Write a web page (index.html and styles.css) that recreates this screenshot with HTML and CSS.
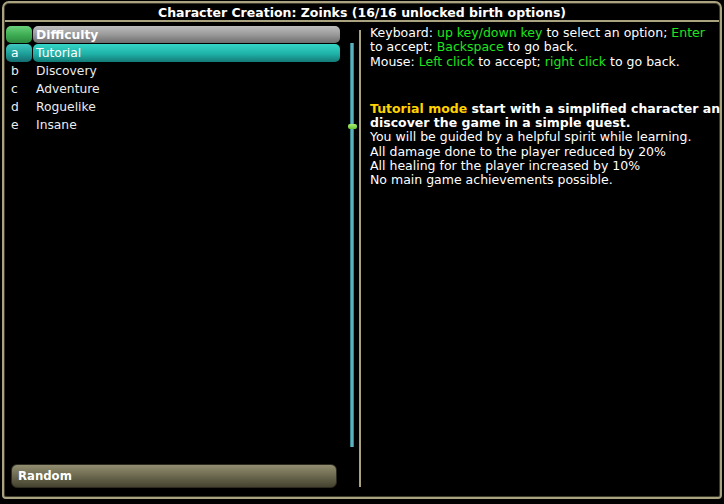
FILE: index.html
```html
<!DOCTYPE html>
<html>
<head>
<meta charset="utf-8">
<link rel="stylesheet" href="styles.css">
</head>
<body>
<div class="frame">
  <div class="title">Character Creation: Zoinks (16/16 unlocked birth options)</div>
  <div class="main">
    <div class="left">
      <div class="listwrap">
        <div class="list">
          <div class="row head">
            <div class="key keyhead"></div>
            <div class="label labelhead">Difficulty</div>
          </div>
          <div class="row sel">
            <div class="key keysel">a</div>
            <div class="label labelsel">Tutorial</div>
          </div>
          <div class="row">
            <div class="key">b</div>
            <div class="label">Discovery</div>
          </div>
          <div class="row">
            <div class="key">c</div>
            <div class="label">Adventure</div>
          </div>
          <div class="row">
            <div class="key">d</div>
            <div class="label">Roguelike</div>
          </div>
          <div class="row">
            <div class="key">e</div>
            <div class="label">Insane</div>
          </div>
        </div>
        <div class="scroll"><div class="thumb"></div></div>
      </div>
      <div class="random">Random</div>
    </div>
    <div class="divider"></div>
    <div class="right">
      <div class="help">
        <div>Keyboard: <span class="g">up key/down key</span> to select an option; <span class="g">Enter</span></div>
        <div>to accept; <span class="g">Backspace</span> to go back.</div>
        <div>Mouse: <span class="g">Left click</span> to accept; <span class="g">right click</span> to go back.</div>
      </div>
      <div class="desc">
        <div class="b"><span class="y">Tutorial mode</span> start with a simplified character and</div>
        <div class="b">discover the game in a simple quest.</div>
        <div>You will be guided by a helpful spirit while learning.</div>
        <div>All damage done to the player reduced by 20%</div>
        <div>All healing for the player increased by 10%</div>
        <div>No main game achievements possible.</div>
      </div>
    </div>
  </div>
</div>
</body>
</html>
```

FILE: styles.css
```css
html, body {
  margin: 0;
  padding: 0;
  background: #000;
}
body {
  width: 724px;
  height: 504px;
  overflow: hidden;
  font-family: "DejaVu Sans", "Liberation Sans", sans-serif;
  color: #fff;
}
.frame {
  box-sizing: border-box;
  margin: 1px 2px 0 2px;
  width: 720px;
  height: 498px;
  border: 2px solid #aaa37f;
  border-radius: 7px 7px 4px 4px;
  box-shadow: inset 0 0 0 1px #3e3b2c;
  display: flex;
  flex-direction: column;
  overflow: hidden;
}
.title {
  height: 17px;
  margin: 0 1px;
  border-bottom: 2px solid #aaa37f;
  text-align: center;
  font-weight: bold;
  font-size: 12.5px;
  line-height: 19px;
  color: #fff;
}
.main {
  flex: 1;
  display: flex;
  min-height: 0;
}
.left {
  width: 355px;
  display: flex;
  flex-direction: column;
  padding: 4px 0 9px 2px;
  box-sizing: border-box;
}
.listwrap {
  flex: 1;
  display: flex;
}
.list {
  width: 334px;
}
.row {
  height: 18px;
  display: flex;
  font-size: 12.3px;
  line-height: 19px;
  color: #ececec;
}
.key {
  width: 26px;
  padding-left: 5px;
  box-sizing: border-box;
  margin-right: 1px;
}
.label {
  flex: 1;
  padding-left: 3px;
}
.keyhead {
  margin: 0 1px 1px 0;
  height: 17px;
  border-radius: 5px;
  background: linear-gradient(#6ad27a, #3fae55 50%, #2a8a3e);
}
.labelhead {
  margin-bottom: 1px;
  border-radius: 5px;
  background: linear-gradient(#bdbdbd, #9a9a9a 50%, #6e6e6e);
  font-weight: bold;
  line-height: 19px;
  color: #fff;
}
.keysel {
  border-radius: 5px;
  background: linear-gradient(#3ec9c0, #1d9d98 55%, #156d70);
  color: #fff;
}
.labelsel {
  border-radius: 5px;
  background: linear-gradient(#35d5c8, #1fb2a8 55%, #137a76);
  color: #fff;
}
.scroll {
  position: relative;
  margin: 17px 0 0 10px;
  width: 4px;
  height: 404px;
  background: linear-gradient(90deg, #1f6e7a, #74c6d2 50%, #1f6e7a);
}
.thumb {
  position: absolute;
  left: -2px;
  top: 81px;
  width: 9px;
  height: 5px;
  border-radius: 2px;
  background: linear-gradient(#a8f070, #6cc43a);
}
.random {
  margin-left: 5px;
  width: 326px;
  height: 24px;
  box-sizing: border-box;
  border: 1px solid #2d2b20;
  border-radius: 6px;
  background: linear-gradient(#938e70, #6c684f 50%, #44422f);
  font-family: "DejaVu Sans Condensed", "DejaVu Sans", sans-serif;
  font-weight: bold;
  font-size: 13px;
  line-height: 21px;
  padding-left: 6px;
  color: #fff;
}
.divider {
  width: 2px;
  margin: 8px 0 10px 0;
  background: #aaa37f;
}
.right {
  flex: 1;
  padding: 4px 0 0 9px;
  overflow: hidden;
  font-size: 12.5px;
  line-height: 14.3px;
}
.help div, .desc div {
  white-space: nowrap;
}
.desc {
  margin-top: 33px;
}
.g { color: #1ee61e; }
.y { color: #ffd200; }
.b { font-weight: bold; }
```
